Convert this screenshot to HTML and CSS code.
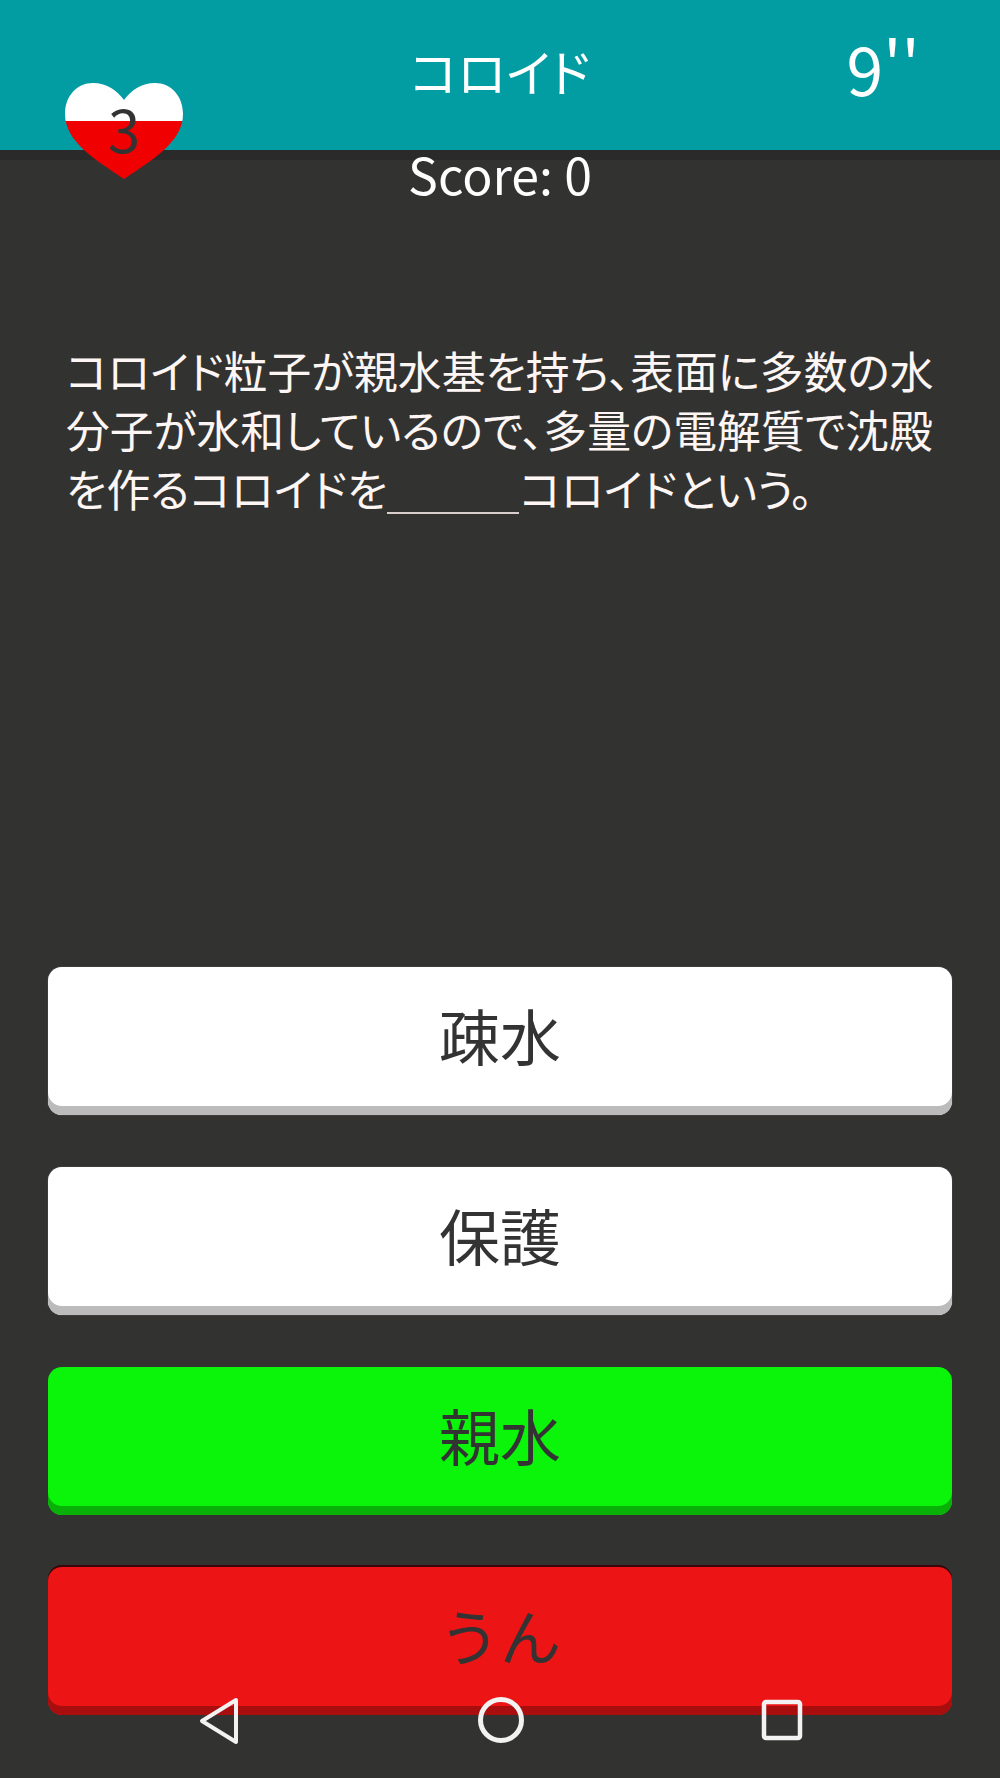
FILE: index.html
```html
<!DOCTYPE html>
<html lang="ja">

<head>
    <meta charset="UTF-8">
    <meta name="viewport" content="width=device-width, initial-scale=1.0">
    <title>コロイド</title>
    <link rel="stylesheet" href="styles.css">
</head>

<body>
    <div class="screen">
        <div class="topbar">
            <span class="title">コロイド</span>
            <span class="timer">9''</span>
        </div>
        <div class="score">Score: 0</div>
        <p class="question">コロイド粒子が親水基を持ち、表面に多数の水分子が水和しているので、多量の電解質で沈殿を作るコロイドを<span class="blank"></span>コロイドという。</p>
        <div class="answers">
            <div class="answer">疎水</div>
            <div class="answer">保護</div>
            <div class="answer right">親水</div>
            <div class="answer wrong">うん</div>
        </div>

        <div class="lives">
            <svg width="120" height="98" viewBox="0 0 120 98">
                <defs>
                    <linearGradient id="fill" x1="0" y1="0" x2="0" y2="1">
                        <stop offset="0.395" stop-color="#ffffff" />
                        <stop offset="0.395" stop-color="#f00000" />
                    </linearGradient>
                </defs>
                <path d="M60 97 C32 78 1 60 1 32 C1 14 13 1 29 1 C42 1 53 8 60 18 C67 8 78 1 91 1 C107 1 119 14 119 32 C119 60 88 78 60 97 Z" fill="url(#fill)" />
            </svg>
            <span class="lives-count">3</span>
        </div>

        <div class="navbar">
            <svg width="44" height="50" viewBox="0 0 44 50">
                <path d="M38 4 L4 25 L38 46 Z" fill="none" stroke="#f2f2f2" stroke-width="4" stroke-linejoin="round" />
            </svg>
            <svg width="48" height="48" viewBox="0 0 48 48">
                <circle cx="24" cy="24" r="20.5" fill="none" stroke="#f2f2f2" stroke-width="5" />
            </svg>
            <svg width="42" height="42" viewBox="0 0 42 42">
                <rect x="3" y="3" width="36" height="36" rx="2" fill="none" stroke="#f2f2f2" stroke-width="4.5" />
            </svg>
        </div>
    </div>
</body>

</html>
```

FILE: styles.css
```css
* {
    margin: 0;
    padding: 0;
    box-sizing: border-box;
}

body {
    background-color: #323331;
    font-family: "Noto Sans CJK JP", "Noto Sans", sans-serif;
    color: #ffffff;
}

.screen {
    position: relative;
    width: 1000px;
    height: 1778px;
    overflow: hidden;
    display: flex;
    flex-direction: column;
}

.topbar {
    height: 150px;
    padding-bottom: 10px;
    background-color: #029ca3;
    box-shadow: 0 10px 0 #2a2a2a;
    display: flex;
    align-items: center;
    justify-content: center;
    position: relative;
}

.title {
    font-size: 50px;
    font-feature-settings: "palt";
}

.timer {
    position: absolute;
    right: 80px;
    top: 22px;
    font-size: 66px;
    line-height: 90px;
}

.score {
    margin-top: -12px;
    position: relative;
    text-align: center;
    font-size: 50px;
    line-height: 70px;
}

.question {
    margin-top: 133px;
    padding: 0 56px 0 66px;
    font-size: 43.8px;
    line-height: 59px;
    color: #fdf6f4;
    font-feature-settings: "palt";
}

.blank {
    display: inline-block;
    width: 132px;
    height: 2px;
    background-color: #d8cfcc;
    vertical-align: -7px;
}

.answers {
    position: absolute;
    top: 967px;
    left: 48px;
    right: 48px;
    display: flex;
    flex-direction: column;
    gap: 52px;
}

.answer {
    height: 148px;
    padding-bottom: 13px;
    border-radius: 14px;
    background-color: #ffffff;
    box-shadow: inset 0 -9px 0 #bbbbbb, 0 0 1px #9a9aa5;
    color: #333333;
    font-size: 61px;
    display: flex;
    align-items: center;
    justify-content: center;
}

.answer.right {
    background-color: #0af50a;
    box-shadow: inset 0 -9px 0 #08b008;
}

.answer.wrong {
    background-color: #ec1414;
    box-shadow: inset 0 -9px 0 #a80e0e, 0 -2px 0 #3a0505;
}

.lives {
    position: absolute;
    left: 64px;
    top: 82px;
    width: 120px;
    height: 98px;
}

.lives-count {
    position: absolute;
    inset: 0;
    text-align: center;
    font-size: 58px;
    line-height: 92px;
    color: #333333;
}

.navbar {
    position: absolute;
    left: 0;
    right: 0;
    top: 1696px;
    height: 48px;
}

.navbar svg {
    position: absolute;
    top: 0;
}

.navbar svg:nth-child(1) {
    left: 198px;
}

.navbar svg:nth-child(2) {
    left: 477px;
}

.navbar svg:nth-child(3) {
    left: 761px;
    top: 3px;
}
```
